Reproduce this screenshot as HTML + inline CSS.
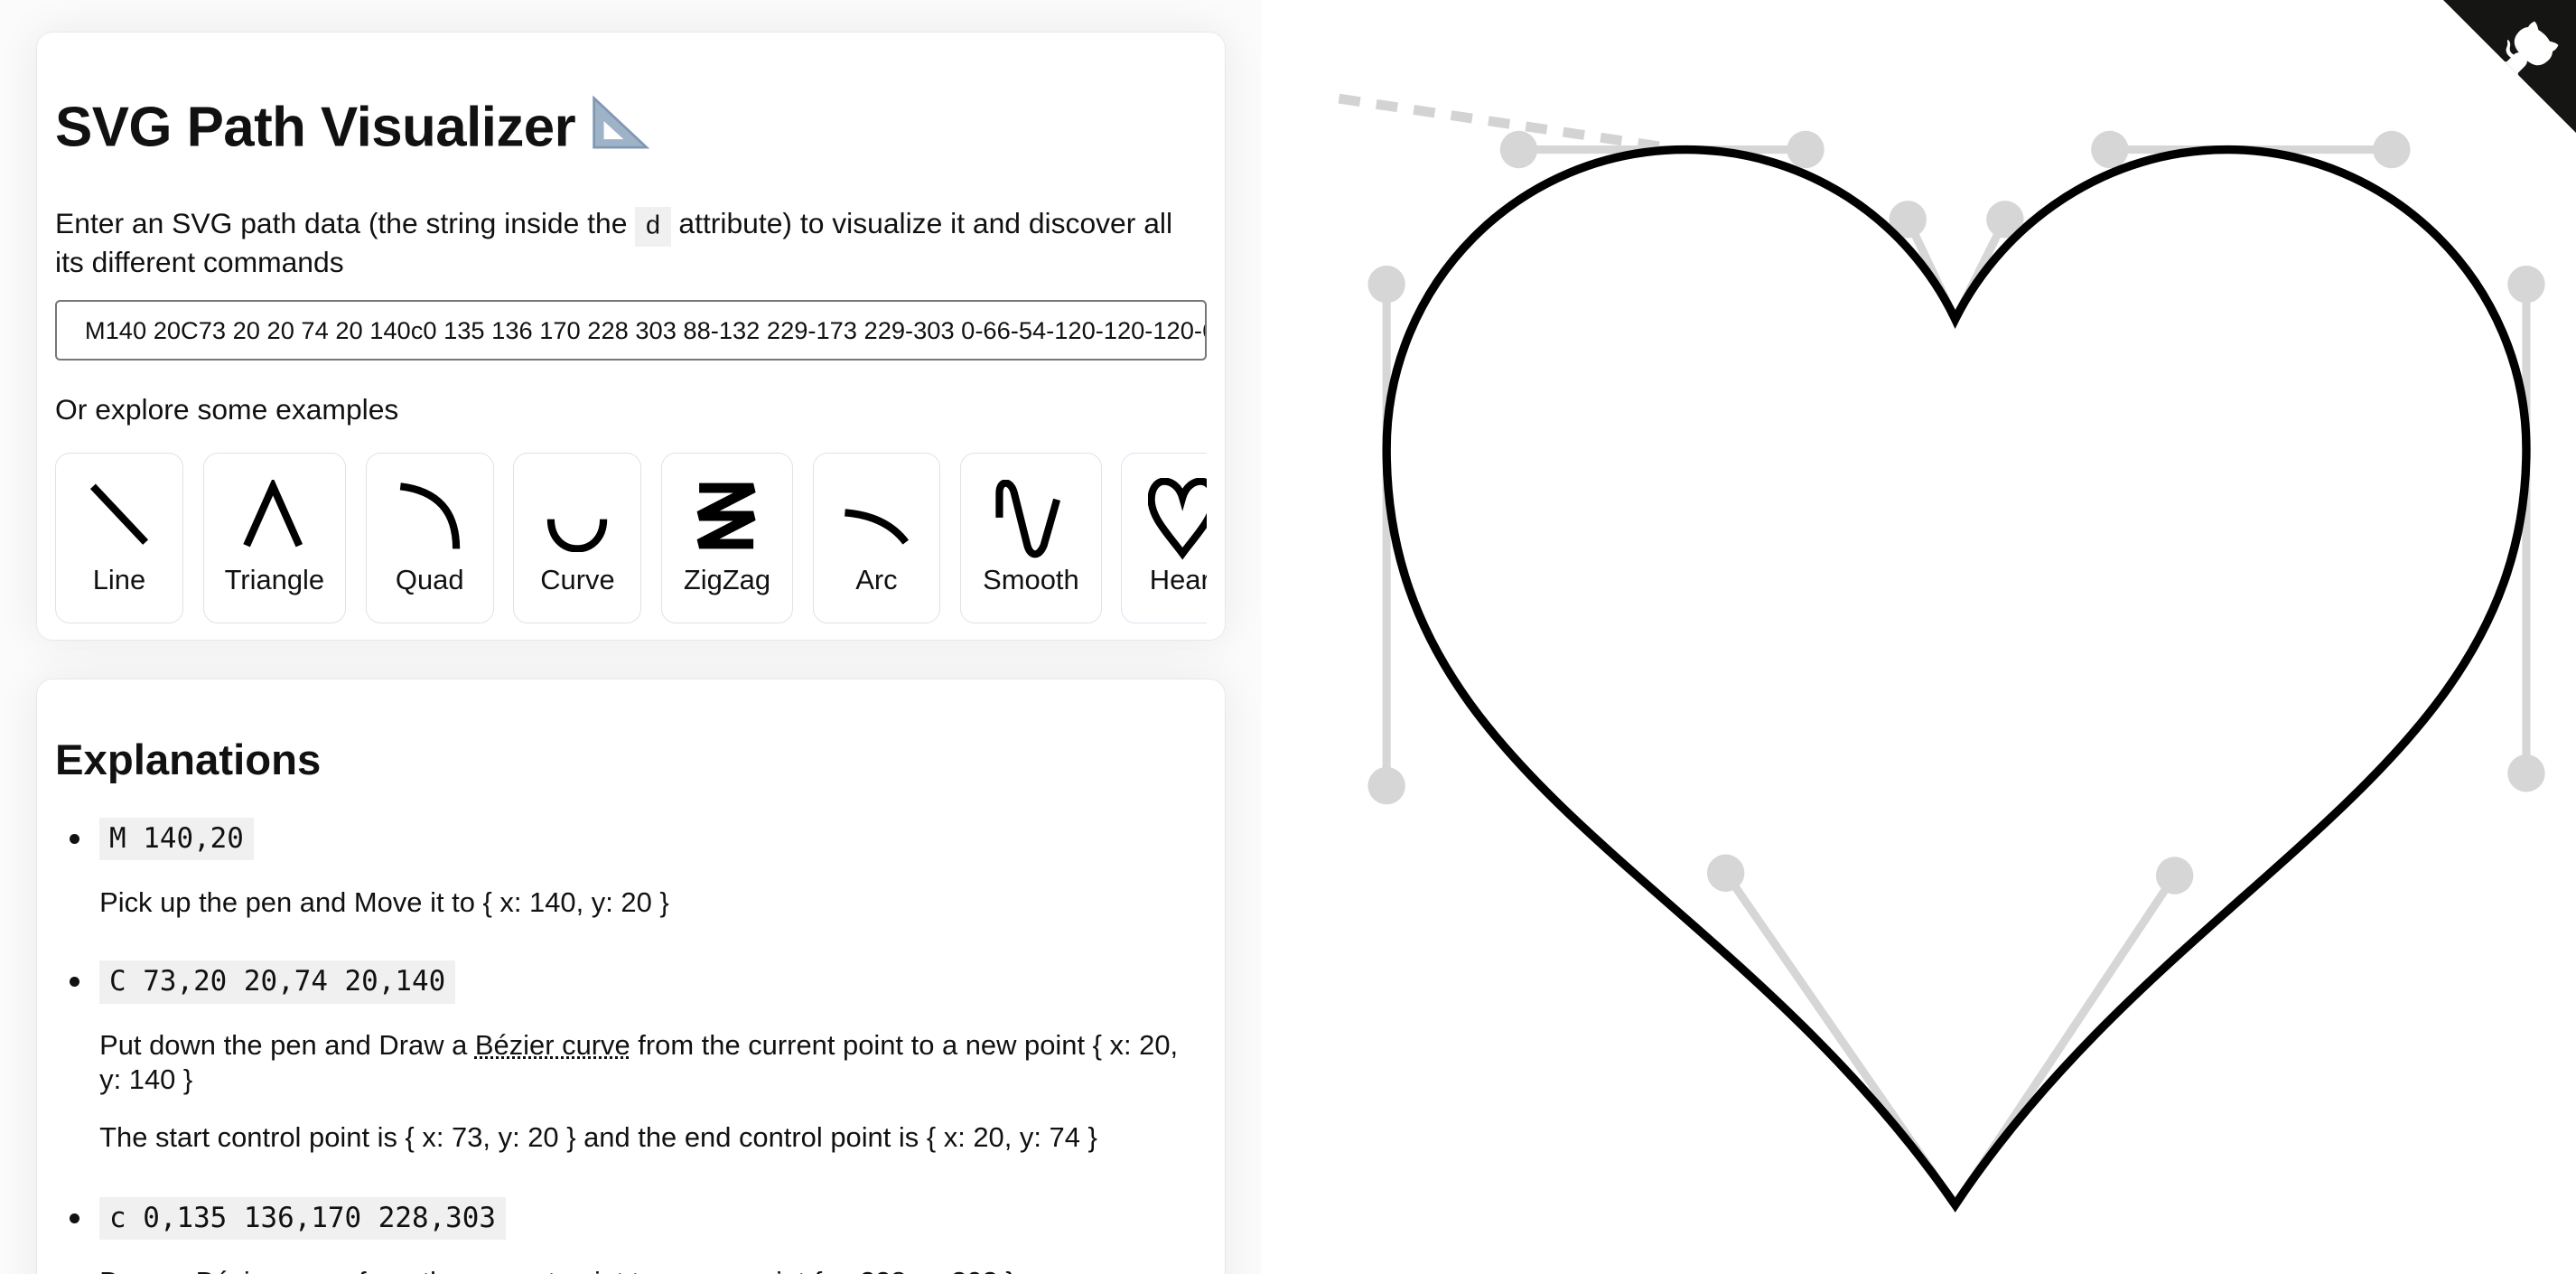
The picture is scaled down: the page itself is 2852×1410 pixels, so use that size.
<!DOCTYPE html>
<html><head><meta charset="utf-8"><style>
*{box-sizing:border-box;margin:0;padding:0}
html,body{width:1568px;height:775px;overflow:hidden;background:#fff}
body{zoom:1.8189;font-family:"Liberation Sans",sans-serif;color:#111;position:relative}
.left{position:absolute;left:0;top:0;width:768px;height:775px;background:#fbfbfb}
.card{position:absolute;left:22px;width:724px;background:#fff;border:1px solid #e8e8e8;border-radius:10px;box-shadow:0 0 26px rgba(0,0,0,.07)}
h1{position:absolute;left:11px;top:38px;font-size:34px;font-weight:bold;letter-spacing:-.3px}
.p{position:absolute;left:11px;width:701px;font-size:17.5px;line-height:21px}
code.i{font-family:"Liberation Mono",monospace;background:#f0f0f0;padding:3px 6px;font-size:16px}
.inp{position:absolute;left:11px;top:163px;width:701px;height:37px;border:1.5px solid #777;border-radius:3px;font-size:15px;padding:9px 0 0 17px;white-space:nowrap;overflow:hidden}
.tiles{position:absolute;left:11px;top:256px;width:701px;height:104px;overflow:hidden}
.t{position:absolute;top:0;height:104px;border:1px solid #e2e2e2;border-radius:9px;background:#fff;text-align:center}
.t svg{position:absolute;top:16px;left:50%;margin-left:-22px}
.t span{position:absolute;left:0;right:0;top:67px;font-size:17px}
h2{position:absolute;left:11px;top:34px;font-size:26px;font-weight:bold}
.b{position:absolute;left:20px;width:6px;height:6px;border-radius:50%;background:#111}
.c{position:absolute;left:38px;height:26px;background:#f0f0f0;font-family:"DejaVu Sans Mono","Liberation Mono",monospace;font-size:17px;line-height:26px;padding:0 6px}
.tx{position:absolute;left:38px;width:670px;font-size:17px;line-height:21px}
u{text-decoration:underline dotted}
</style></head><body>
<div class="left"></div>
<div class="card" style="top:19px;height:371px">
<h1>SVG Path Visualizer <svg width="36" height="34" viewBox="0 0 36 34" style="vertical-align:-3px"><path d="M2 2 L34 32 L2 32 Z" fill="#9fb3c8" stroke="#7f97b0" stroke-width="1.5"/><path d="M8 16 L20 27 L8 27 Z" fill="#fff"/></svg></h1>
<div class="p" style="top:106px">Enter an SVG path data (the string inside the <code class="i">d</code> attribute) to visualize it and discover all its different commands</div>
<div class="inp">M140 20C73 20 20 74 20 140c0 135 136 170 228 303 88-132 229-173 229-303 0-66-54-120-120-120-65 0-109 68-109 68</div>
<div class="p" style="top:219px">Or explore some examples</div>
<div class="tiles">
<div class="t" style="left:0;width:78px"><svg width="44" height="44" viewBox="0 0 44 44"><path d="M6 4 L38 38" stroke="#000" stroke-width="4.5" fill="none"/></svg><span>Line</span></div>
<div class="t" style="left:90px;width:87px"><svg width="44" height="44" viewBox="0 0 44 44"><path d="M5 40 L21 4 L37 40" stroke="#000" stroke-width="4.5" fill="none"/></svg><span>Triangle</span></div>
<div class="t" style="left:189px;width:78px"><svg width="44" height="44" viewBox="0 0 44 44"><path d="M4 4 Q38 8 38 42" stroke="#000" stroke-width="4.5" fill="none"/></svg><span>Quad</span></div>
<div class="t" style="left:279px;width:78px"><svg width="44" height="44" viewBox="0 0 44 44"><path d="M6 24 C6 48 38 48 38 24" stroke="#000" stroke-width="4.5" fill="none"/></svg><span>Curve</span></div>
<div class="t" style="left:369px;width:80px"><svg width="44" height="44" viewBox="0 0 44 44"><path d="M5 5 L38 5 L5 22 L38 22 L5 39 L38 39" stroke="#000" stroke-width="6" fill="none"/></svg><span>ZigZag</span></div>
<div class="t" style="left:461px;width:78px"><svg width="44" height="44" viewBox="0 0 44 44"><path d="M3 20 Q28 22 40 38" stroke="#000" stroke-width="4.5" fill="none"/></svg><span>Arc</span></div>
<div class="t" style="left:551px;width:86px"><svg width="44" height="50" viewBox="0 0 44 50"><path d="M3 23 L3 8 C3 0 10 0 12 8 L20 40 C22 47 27 47 30 40 L38 12" stroke="#000" stroke-width="4.5" fill="none"/></svg><span>Smooth</span></div>
<div class="t" style="left:649px;width:80px;border-color:#dde4f0"><svg width="44" height="50" viewBox="0 0 44 50" style="margin-left:-24px;top:15px"><path d="M21 12 C19 5 14 2 10 2 C5 2 2 7 2 13 C2 24 12 34 21 46 C30 34 40 24 40 13 C40 7 37 2 32 2 C28 2 23 5 21 12 Z" stroke="#000" stroke-width="4.5" fill="none"/></svg><span style="left:-4px">Heart</span></div>
</div>
</div>
<div class="card" style="top:413px;height:400px">
<h2>Explanations</h2>
<div class="b" style="top:94px"></div><div class="c" style="top:84px">M 140,20</div>
<div class="tx" style="top:125px">Pick up the pen and Move it to { x: 140, y: 20 }</div>
<div class="b" style="top:181px"></div><div class="c" style="top:171px">C 73,20 20,74 20,140</div>
<div class="tx" style="top:212px">Put down the pen and Draw a <u>Bézier curve</u> from the current point to a new point { x: 20, y: 140 }</div>
<div class="tx" style="top:268px">The start control point is { x: 73, y: 20 } and the end control point is { x: 20, y: 74 }</div>
<div class="b" style="top:325px"></div><div class="c" style="top:315px">c 0,135 136,170 228,303</div>
<div class="tx" style="top:356px">Draw a Bézier curve from the current point to a new point { x: 228, y: 303 }</div>
</div>
<svg style="position:absolute;left:0;top:0" width="1568" height="775">
<line x1="815" y1="60" x2="1010" y2="89" stroke="#d3d3d3" stroke-width="6" stroke-dasharray="13 10"/>
<g transform="translate(844,91) scale(1.518) translate(-20,-20)" stroke="#d6d6d6" stroke-width="3.3" fill="#d6d6d6">
<path d="M140 20H73M140 20H188M20 140V74M20 140V275M248 443L156 310M248 443L336 311M477 140V270M477 140V74M357 20H423M357 20H310M248 88L268 48M248 88L229 48" fill="none"/>
<g stroke="none">
<circle cx="73" cy="20" r="7.5"/><circle cx="188" cy="20" r="7.5"/><circle cx="20" cy="74" r="7.5"/><circle cx="20" cy="275" r="7.5"/><circle cx="156" cy="310" r="7.5"/><circle cx="336" cy="311" r="7.5"/><circle cx="477" cy="270" r="7.5"/><circle cx="477" cy="74" r="7.5"/><circle cx="423" cy="20" r="7.5"/><circle cx="310" cy="20" r="7.5"/><circle cx="268" cy="48" r="7.5"/><circle cx="229" cy="48" r="7.5"/>
</g>
<path d="M140 20C73 20 20 74 20 140c0 135 136 170 228 303 88-132 229-173 229-303 0-66-54-120-120-120-47 0-89 28-109 68C229 48 188 20 140 20Z" fill="none" stroke="#000" stroke-width="3.4"/>
</g>
</svg>
<svg style="position:absolute;right:0;top:0" width="81" height="81" viewBox="0 0 250 250"><path d="M0,0 L250,250 L250,0 Z" fill="#151513"/><path d="M128.3,109.0 C113.8,99.7 119.0,89.6 119.0,89.6 C122.0,82.7 120.5,78.6 120.5,78.6 C119.2,72.0 123.4,76.3 123.4,76.3 C127.3,80.9 125.5,87.3 125.5,87.3 C122.9,97.6 130.6,101.9 134.4,103.2" fill="#fff"/><path d="M115.0,115.0 C114.9,115.1 118.7,116.5 119.8,115.4 L133.7,101.6 C136.9,99.2 139.9,98.4 142.2,98.6 C133.8,88.0 127.5,74.4 143.8,58.0 C148.5,53.4 154.0,51.2 159.7,51.0 C160.3,49.4 163.2,43.6 171.4,40.1 C171.4,40.1 176.1,42.5 178.8,56.2 C183.1,58.6 187.2,61.8 190.9,65.4 C194.5,69.0 197.7,73.2 200.1,77.6 C213.8,80.2 216.3,84.9 216.3,84.9 C212.7,93.1 206.9,96.0 205.4,96.6 C205.1,102.4 203.0,107.8 198.3,112.5 C181.9,128.9 168.3,122.5 157.7,114.1 C157.9,116.9 156.7,120.9 152.7,124.9 L141.0,136.5 C139.8,137.7 141.6,141.9 141.8,141.8 Z" fill="#fff"/></svg>
</body></html>
